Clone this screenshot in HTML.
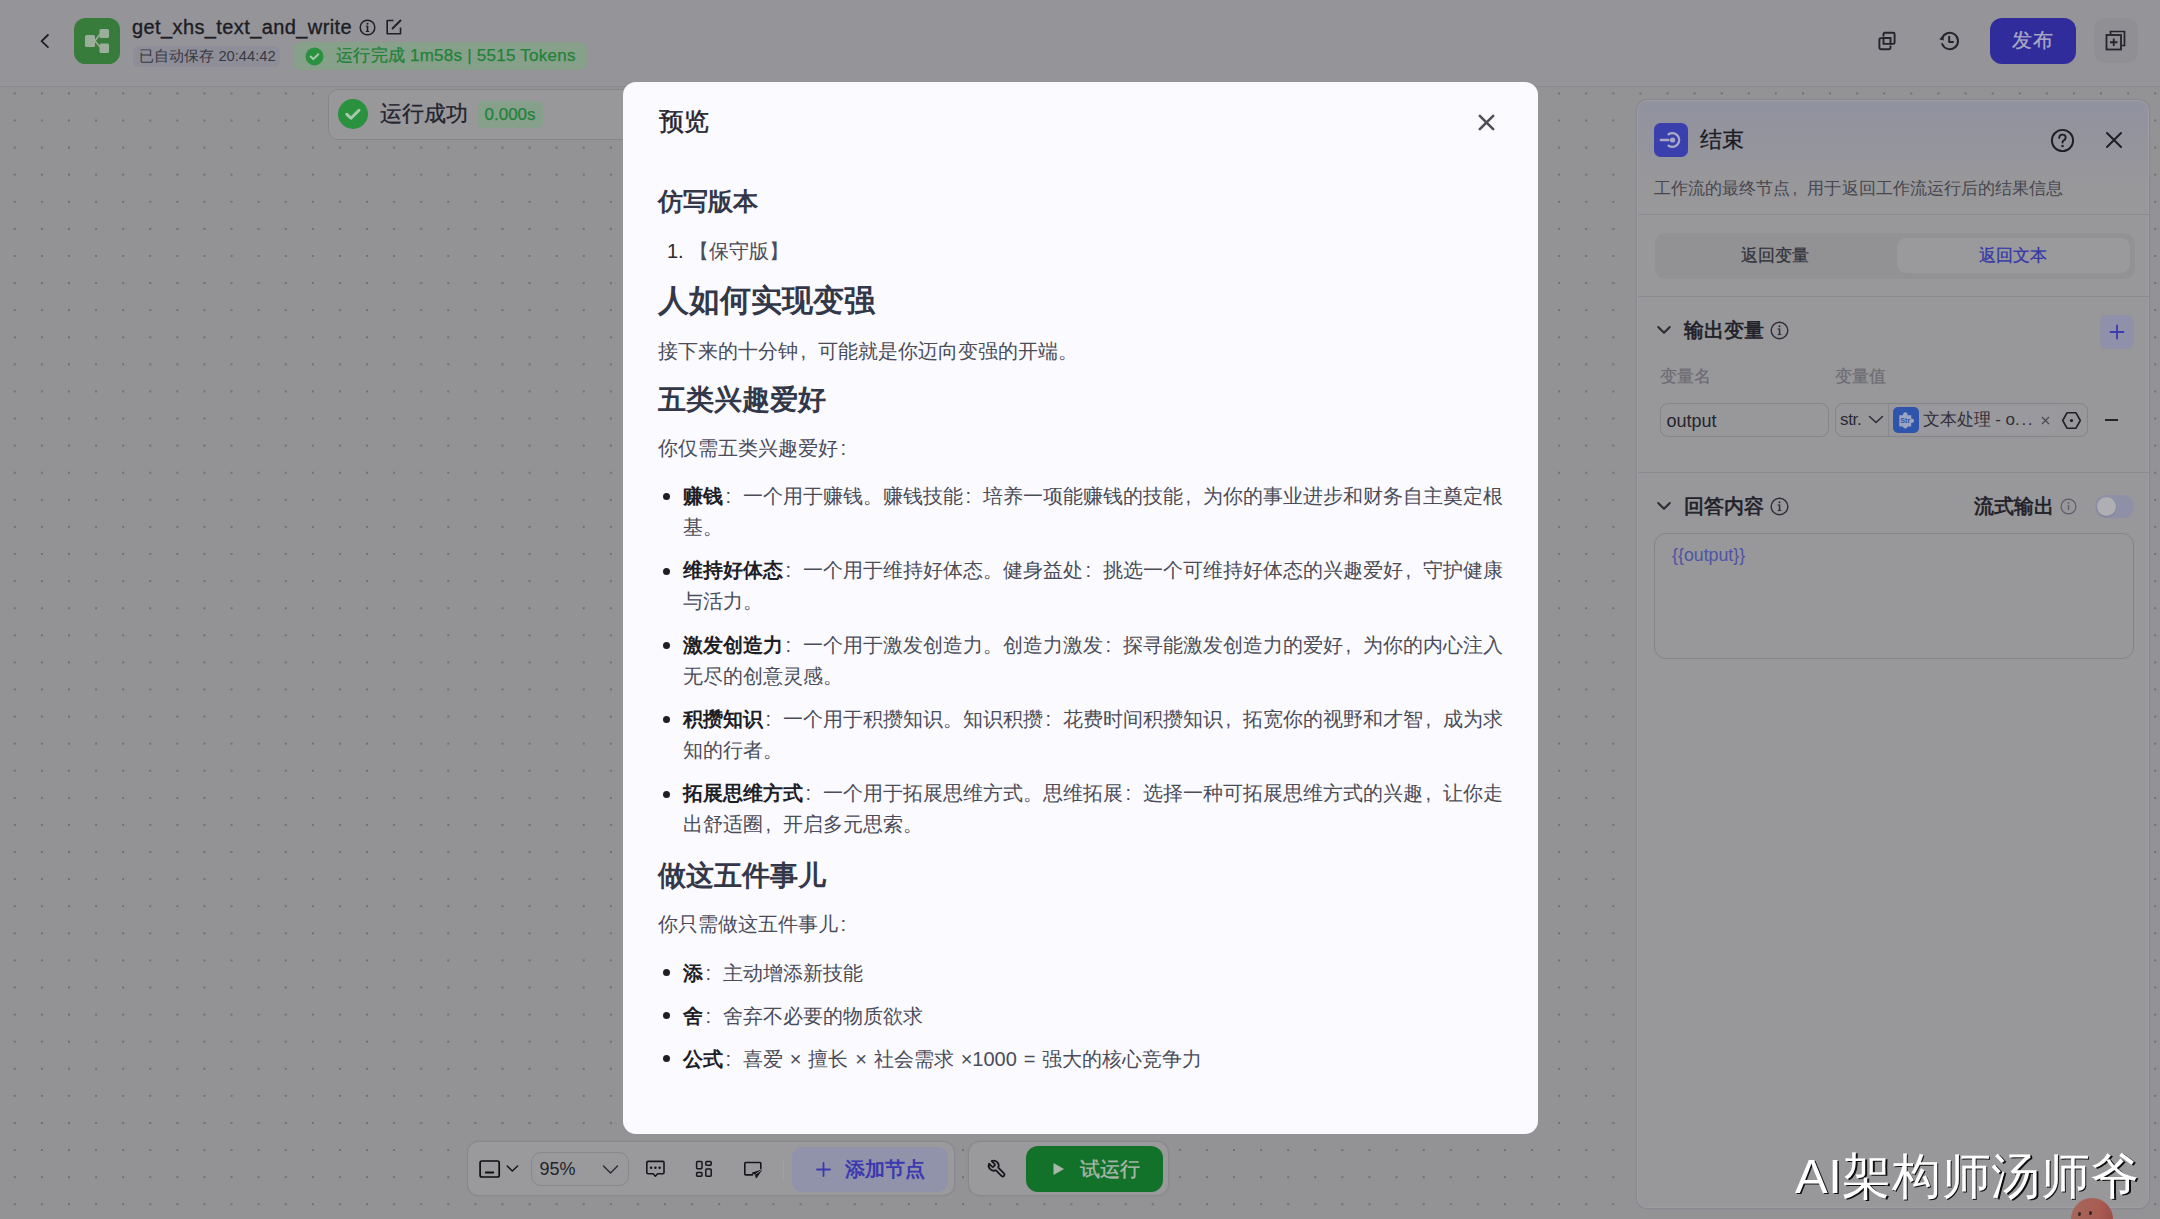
<!DOCTYPE html>
<html><head><meta charset="utf-8">
<style>
*{box-sizing:border-box;margin:0;padding:0}
html,body{width:2160px;height:1219px;overflow:hidden}
body{font-family:"Liberation Sans",sans-serif;background:#939396;position:relative;color:#1c1c24}
.a{position:absolute;white-space:nowrap}
svg.a{overflow:visible}
#canvas{position:absolute;left:0;top:87px;width:2160px;height:1132px;background-color:#939396;
background-image:radial-gradient(circle at 50% 50%,#707072 0,#707072 0.8px,rgba(112,112,114,0) 1.45px);
background-size:27.1px 27.1px;background-position:1.25px -7.15px}
#header{position:absolute;left:0;top:0;width:2160px;height:87px;background:#959499;border-bottom:1.3px solid #88888f}
#modal{position:absolute;left:623px;top:82px;width:915px;height:1052px;background:#fbfaff;border-radius:13px}
.h{color:#333849;font-weight:bold}
.b{font-size:20px;line-height:32px;color:#4a4c58}
.b b{color:#1e1e26}
.p{font-style:normal;display:inline-block;width:1em;text-indent:.12em}
.dot{position:absolute;left:663.3px;width:7px;height:7px;border-radius:50%;background:#1e1e26}
</style></head><body>
<div id="canvas"></div>
<div id="header">
  <svg class="a" style="left:38px;top:32px" width="14" height="18" viewBox="0 0 14 18"><path d="M9.9 3 L3.6 9.1 L9.9 15.1" fill="none" stroke="#1e1e26" stroke-width="1.8" stroke-linecap="round" stroke-linejoin="round"/></svg>
  <div class="a" style="left:74px;top:18px;width:46px;height:46px;border-radius:11.5px;background:#377c3b"></div>
  <svg class="a" style="left:74px;top:18px" width="46" height="46" viewBox="0 0 46 46">
    <g fill="#9aae9b"><rect x="11" y="17" width="10" height="12" rx="1.5"/><rect x="25.5" y="11" width="9.5" height="9" rx="1.5"/><rect x="25.5" y="25.5" width="9.5" height="9.5" rx="1.5"/></g>
    <path d="M21 23 L26 16 M21 23 L26 29" stroke="#9aae9b" stroke-width="1.5" fill="none"/>
  </svg>
  <div class="a" style="left:132px;top:14px;font-size:20px;line-height:26px;color:#1c1c24;letter-spacing:0.4px;-webkit-text-stroke:0.35px #1c1c24">get_xhs_text_and_write</div>
  <svg class="a" style="left:359px;top:18.5px" width="17" height="17" viewBox="0 0 17 17"><circle cx="8.5" cy="8.5" r="7.3" fill="none" stroke="#1e1e26" stroke-width="1.5"/><rect x="7.7" y="7" width="1.6" height="5.5" fill="#1e1e26"/><circle cx="8.5" cy="4.8" r="1" fill="#1e1e26"/><path d="M6.8 7.2h2.4M6.8 12.5h3.4" stroke="#1e1e26" stroke-width="1"/></svg>
  <svg class="a" style="left:386px;top:19px" width="16" height="16" viewBox="0 0 16 16"><path d="M7.5 1.5 H1.2 V14.8 H14.5 V8.5" fill="none" stroke="#1e1e26" stroke-width="1.6" stroke-linejoin="round"/><path d="M6.5 9.5 L14.5 1.5" stroke="#1e1e26" stroke-width="1.8" stroke-linecap="round"/></svg>
  <div class="a" style="left:132.5px;top:45.5px;width:147.5px;height:21.5px;border-radius:6px;background:#8e8e99"></div>
  <div class="a" style="left:139.3px;top:45.5px;font-size:14.7px;line-height:21.5px;color:#383842">已自动保存 20:44:42</div>
  <div class="a" style="left:292.5px;top:42.3px;width:294px;height:28px;border-radius:8px;background:#86a089"></div>
  <svg class="a" style="left:304.5px;top:47.3px" width="19" height="19" viewBox="0 0 19 19"><circle cx="9.5" cy="9.5" r="9" fill="#2a913f"/><path d="M5.6 9.6 L8.3 12.1 L13.3 7.2" fill="none" stroke="#a8c8ac" stroke-width="2" stroke-linecap="round" stroke-linejoin="round"/></svg>
  <div class="a" style="left:336px;top:42.3px;font-size:17px;line-height:28px;color:#22823a;letter-spacing:0.25px;-webkit-text-stroke:0.25px #22823a">运行完成 1m58s | 5515 Tokens</div>

  <svg class="a" style="left:1877px;top:31px" width="20" height="20" viewBox="0 0 20 20"><path d="M6.5 5.5 V3.2 Q6.5 1.8 7.9 1.8 H16.2 Q17.6 1.8 17.6 3.2 V11.5 Q17.6 12.9 16.2 12.9 H13.6" fill="none" stroke="#24242c" stroke-width="1.9"/><path d="M13.5 14.5 V16.8 Q13.5 18.2 12.1 18.2 H3.8 Q2.4 18.2 2.4 16.8 V8.5 Q2.4 7.1 3.8 7.1 H6.4" fill="none" stroke="#24242c" stroke-width="1.9"/><path d="M6.5 7 V12.9 H13.5 V7 Z" fill="none" stroke="#24242c" stroke-width="1.9"/></svg>
  <svg class="a" style="left:1938px;top:30.5px" width="22" height="20" viewBox="0 0 22 20"><path d="M4 7.5 A 8.2 8.2 0 1 1 4.2 13" fill="none" stroke="#24242c" stroke-width="2" stroke-linecap="round"/><path d="M1.2 8.2 L5.2 4.6 L5.8 9.4 Z" fill="#24242c"/><path d="M11.2 5.8 V11 H15" fill="none" stroke="#24242c" stroke-width="2" stroke-linecap="round" stroke-linejoin="round"/></svg>
  <div class="a" style="left:1990px;top:18px;width:85.5px;height:45.5px;border-radius:12px;background:#302c9b;color:#a9a8c4;-webkit-text-stroke:0.3px #a9a8c4;font-size:20px;line-height:45.5px;text-align:center;letter-spacing:0.5px">发布</div>
  <div class="a" style="left:2093.5px;top:17.5px;width:44.5px;height:45px;border-radius:12px;background:#908f94"></div>
  <svg class="a" style="left:2105px;top:30px" width="21" height="21" viewBox="0 0 21 21"><path d="M5.5 4.5 V1.5 H19.5 V15.5 H16.5" fill="none" stroke="#24242c" stroke-width="1.7"/><rect x="1.5" y="5" width="14.5" height="14.5" fill="none" stroke="#24242c" stroke-width="1.8"/><path d="M8.75 8.5 V16 M5 12.25 H12.5" stroke="#24242c" stroke-width="1.8"/></svg>
</div>

<!-- node card -->
<div class="a" style="left:327.5px;top:89.3px;width:420px;height:50.5px;border-radius:10px;background:#98989b;border:1.3px solid #85858c"></div>
<svg class="a" style="left:338px;top:99.4px" width="30" height="30" viewBox="0 0 30 30"><circle cx="15" cy="15" r="15" fill="#2a913f"/><path d="M8.8 15.3 L13 19.2 L21 11.3" fill="none" stroke="#a8c8ac" stroke-width="3" stroke-linecap="round" stroke-linejoin="round"/></svg>
<div class="a" style="left:380px;top:99.4px;font-size:22px;line-height:30px;color:#24242e;-webkit-text-stroke:0.3px #24242e">运行成功</div>
<div class="a" style="left:477px;top:100.8px;width:66px;height:27px;border-radius:5px;background:#87a08c;color:#22823a;font-size:17px;line-height:27px;padding-left:7.5px;-webkit-text-stroke:0.25px #22823a">0.000s</div>

<!-- PANEL -->
<div class="a" style="left:1636.5px;top:99.5px;width:512.5px;height:1108px;border-radius:10px;background:#98979a;border:1.8px solid #9e9da3;box-shadow:0 0 0 1.2px #8a8990;overflow:hidden">
  <div class="a" style="left:0;top:0;width:512px;height:115px;background:linear-gradient(180deg,rgba(140,142,165,.55) 0%,rgba(140,142,165,.25) 45%,rgba(140,142,165,0) 70%)"></div>
</div>
<div class="a" style="left:1654px;top:123px;width:34px;height:34px;border-radius:6.5px;background:#3b3fae"></div>
<svg class="a" style="left:1654px;top:123px" width="34" height="34" viewBox="0 0 34 34"><path d="M6.8 17 H14.5" stroke="#a7a8c6" stroke-width="2.4" stroke-linecap="round"/><path d="M14.6 11.3 A 6.8 6.8 0 1 1 14.6 22.7" fill="none" stroke="#a7a8c6" stroke-width="2.4" stroke-linecap="round"/><circle cx="18.6" cy="17" r="2.6" fill="#a7a8c6"/></svg>
<div class="a" style="left:1700px;top:125px;font-size:22px;line-height:30px;color:#1c1c24;-webkit-text-stroke:0.3px #1c1c24">结束</div>
<svg class="a" style="left:2050px;top:127.5px" width="25" height="25" viewBox="0 0 25 25"><circle cx="12.5" cy="12.5" r="10.6" fill="none" stroke="#1e1e26" stroke-width="1.9"/><path d="M9.2 9.9 Q9.2 6.6 12.5 6.6 Q15.7 6.6 15.7 9.6 Q15.7 11.4 13.8 12.3 Q12.5 13 12.5 14.6" fill="none" stroke="#1e1e26" stroke-width="1.9" stroke-linecap="round"/><circle cx="12.5" cy="17.9" r="1.25" fill="#1e1e26"/></svg>
<svg class="a" style="left:2106px;top:132px" width="16" height="16" viewBox="0 0 16 16"><path d="M1 1 L15 15 M15 1 L1 15" stroke="#1e1e26" stroke-width="2" stroke-linecap="round"/></svg>
<div class="a" style="left:1654px;top:177px;font-size:17px;line-height:24px;color:#46464f;letter-spacing:0.05px">工作流的最终节点<i class="p">,</i>用于返回工作流运行后的结果信息</div>
<div class="a" style="left:1637.5px;top:213.7px;width:511px;height:1.5px;background:#8a8a90"></div>
<!-- segmented -->
<div class="a" style="left:1654.5px;top:233px;width:480px;height:45.5px;border-radius:11px;background:#929295"></div>
<div class="a" style="left:1897px;top:238px;width:232.5px;height:35px;border-radius:9px;background:#9a9a9d"></div>
<div class="a" style="left:1741px;top:242px;font-size:17px;line-height:27px;color:#34343c;-webkit-text-stroke:0.3px #34343c">返回变量</div>
<div class="a" style="left:1978.5px;top:242px;font-size:17px;line-height:27px;color:#3538a6;-webkit-text-stroke:0.3px #3538a6">返回文本</div>
<div class="a" style="left:1637.5px;top:295.7px;width:511px;height:1.5px;background:#8a8a90"></div>
<!-- output vars -->
<svg class="a" style="left:1656px;top:324px" width="16" height="12" viewBox="0 0 16 12"><path d="M2.2 3 L8 8.8 L13.8 3" fill="none" stroke="#2a2a32" stroke-width="2" stroke-linecap="round" stroke-linejoin="round"/></svg>
<div class="a" style="left:1684px;top:316px;font-size:20px;line-height:28px;color:#202028;-webkit-text-stroke:0.65px #202028">输出变量</div>
<svg class="a" style="left:1770px;top:321px" width="19" height="19" viewBox="0 0 19 19"><circle cx="9.5" cy="9.5" r="8.3" fill="none" stroke="#2e2e36" stroke-width="1.4"/><rect x="8.8" y="7.8" width="1.5" height="5.8" fill="#2e2e36"/><circle cx="9.5" cy="5.3" r="1" fill="#2e2e36"/><path d="M7.6 8h2.6M7.6 13.6h3.8" stroke="#2e2e36" stroke-width="1"/></svg>
<div class="a" style="left:2100px;top:314.5px;width:34px;height:34px;border-radius:7px;background:#8f91aa"></div>
<svg class="a" style="left:2100px;top:314.5px" width="34" height="34" viewBox="0 0 34 34"><path d="M17 10.5 V23.5 M10.5 17 H23.5" stroke="#3c3ab0" stroke-width="1.8" stroke-linecap="round"/></svg>
<div class="a" style="left:1659.5px;top:365px;font-size:17px;line-height:24px;color:#6c6c72;-webkit-text-stroke:0.2px #6c6c72">变量名</div>
<div class="a" style="left:1834.5px;top:365px;font-size:17px;line-height:24px;color:#6c6c72;-webkit-text-stroke:0.2px #6c6c72">变量值</div>
<div class="a" style="left:1660px;top:403px;width:169px;height:34px;border-radius:8px;border:1.3px solid #84848b;background:#98989b"></div>
<div class="a" style="left:1666.5px;top:407px;font-size:18px;line-height:28px;color:#24242c">output</div>
<div class="a" style="left:1835px;top:403px;width:253px;height:34px;border-radius:8px;border:1.3px solid #84848b;background:#98989b"></div>
<div class="a" style="left:1888px;top:404px;width:1.2px;height:32px;background:#88888f"></div>
<div class="a" style="left:1840px;top:406px;font-size:17px;line-height:28px;color:#2a2a32;letter-spacing:-0.3px">str.</div>
<svg class="a" style="left:1868px;top:414px" width="16" height="11" viewBox="0 0 16 11"><path d="M1.5 2.5 L8 8.5 L14.5 2.5" fill="none" stroke="#2a2a32" stroke-width="1.5" stroke-linecap="round" stroke-linejoin="round"/></svg>
<div class="a" style="left:1891.5px;top:406.3px;width:165.5px;height:27px;border-radius:6px;background:#9a999d"></div>
<div class="a" style="left:1893.3px;top:407px;width:25.8px;height:25.7px;border-radius:5px;background:#2e55ab"></div>
<svg class="a" style="left:1893.3px;top:407px" width="26" height="26" viewBox="0 0 26 26"><path d="M6.3 8.2 H10 Q10 5.2 12.3 5.2 Q14.6 5.2 14.6 8.2 H18.2 V11.6 Q21 11.6 21 13.8 Q21 16 18.2 16 V19.5 H14.5 Q14.5 21.6 12.3 21.6 Q10.1 21.6 10.1 19.5 H6.3 Z" fill="#9ea5bf"/><text x="12.2" y="16" font-size="7.2" font-weight="bold" fill="#2e55ab" text-anchor="middle" font-family="Liberation Sans">Str</text></svg>
<div class="a" style="left:1922.5px;top:405.5px;font-size:17px;line-height:28px;color:#2f2f38">文本处理 - o<span style="letter-spacing:1.6px">...</span></div>
<svg class="a" style="left:2041px;top:416px" width="9" height="9" viewBox="0 0 9 9"><path d="M1 1 L8 8 M8 1 L1 8" stroke="#4a4a52" stroke-width="1.2"/></svg>
<svg class="a" style="left:2061px;top:410.5px" width="21" height="19" viewBox="0 0 21 19"><path d="M6 1.8 H15 L19.3 9.5 L15 17.2 H6 L1.7 9.5 Z" fill="none" stroke="#1e1e26" stroke-width="1.6" stroke-linejoin="round"/><circle cx="10.5" cy="9.5" r="1.6" fill="#1e1e26"/></svg>
<div class="a" style="left:2104.5px;top:419px;width:13.5px;height:2px;background:#24242c"></div>
<div class="a" style="left:1637.5px;top:471.7px;width:511px;height:1.5px;background:#8a8a90"></div>
<!-- answer -->
<svg class="a" style="left:1656px;top:500px" width="16" height="12" viewBox="0 0 16 12"><path d="M2.2 3 L8 8.8 L13.8 3" fill="none" stroke="#2a2a32" stroke-width="2" stroke-linecap="round" stroke-linejoin="round"/></svg>
<div class="a" style="left:1684px;top:492px;font-size:20px;line-height:28px;color:#202028;-webkit-text-stroke:0.65px #202028">回答内容</div>
<svg class="a" style="left:1770px;top:497px" width="19" height="19" viewBox="0 0 19 19"><circle cx="9.5" cy="9.5" r="8.3" fill="none" stroke="#2e2e36" stroke-width="1.4"/><rect x="8.8" y="7.8" width="1.5" height="5.8" fill="#2e2e36"/><circle cx="9.5" cy="5.3" r="1" fill="#2e2e36"/><path d="M7.6 8h2.6M7.6 13.6h3.8" stroke="#2e2e36" stroke-width="1"/></svg>
<div class="a" style="left:1974px;top:492px;font-size:20px;line-height:28px;color:#202028;-webkit-text-stroke:0.65px #202028">流式输出</div>
<svg class="a" style="left:2060px;top:497.5px" width="17" height="17" viewBox="0 0 17 17"><circle cx="8.5" cy="8.5" r="7.4" fill="none" stroke="#5e5e68" stroke-width="1.2"/><rect x="7.9" y="7" width="1.3" height="5" fill="#5e5e68"/><circle cx="8.5" cy="4.8" r=".9" fill="#5e5e68"/></svg>
<div class="a" style="left:2094.5px;top:494.5px;width:39px;height:23px;border-radius:12px;background:#8e90a8"></div>
<div class="a" style="left:2097px;top:496.5px;width:19px;height:19px;border-radius:50%;background:#aeaeb3;box-shadow:0 1px 2px rgba(0,0,0,.15)"></div>
<div class="a" style="left:1654px;top:533px;width:480px;height:125.5px;border-radius:12px;border:1.3px solid #84848b;background:#98989b"></div>
<div class="a" style="left:1672px;top:541.5px;font-size:17.8px;line-height:26px;color:#4e53a4">{{output}}</div>

<!-- TOOLBAR -->
<div class="a" style="left:466.5px;top:1141.3px;width:488px;height:54.8px;border-radius:12px;background:#9a9a9c;border:1.3px solid #88888e;box-shadow:0 0 2px rgba(0,0,0,.08)"></div>
<svg class="a" style="left:478px;top:1159px" width="23" height="19" viewBox="0 0 23 19"><rect x="2.1" y="2" width="19.1" height="16" rx="1.8" fill="none" stroke="#0e0e12" stroke-width="1.7"/><path d="M7.8 13.5 H15.3" stroke="#0e0e12" stroke-width="1.8" stroke-linecap="round"/></svg>
<svg class="a" style="left:505px;top:1163px" width="14" height="10" viewBox="0 0 14 10"><path d="M2.2 3 L7.3 8 L12.6 3" fill="none" stroke="#0e0e12" stroke-width="1.3" stroke-linecap="round" stroke-linejoin="round"/></svg>
<div class="a" style="left:530.5px;top:1152.3px;width:98px;height:33.5px;border-radius:10px;border:1.3px solid #88888f"></div>
<div class="a" style="left:539.5px;top:1155px;font-size:18px;line-height:28px;color:#24242c">95%</div>
<svg class="a" style="left:602px;top:1164px" width="17" height="11" viewBox="0 0 17 11"><path d="M1.5 2 L8.5 9 L15.5 2" fill="none" stroke="#2e2e36" stroke-width="1.5" stroke-linecap="round" stroke-linejoin="round"/></svg>
<svg class="a" style="left:645px;top:1160px" width="21" height="19" viewBox="0 0 21 19"><path d="M3.2 1.4 H17.8 Q19 1.4 19 2.6 V12.6 Q19 13.8 17.8 13.8 H12.6 L10.4 16.2 L8.2 13.8 H3 Q1.8 13.8 1.8 12.6 V2.6 Q1.8 1.4 3.2 1.4 Z" fill="none" stroke="#16161c" stroke-width="1.6" stroke-linejoin="round"/><circle cx="6.1" cy="7.8" r="1.25" fill="#16161c"/><circle cx="10.4" cy="7.8" r="1.25" fill="#16161c"/><circle cx="14.6" cy="7.8" r="1.25" fill="#16161c"/></svg>
<svg class="a" style="left:695px;top:1160px" width="18" height="18" viewBox="0 0 18 18"><g fill="none" stroke="#16161c" stroke-width="1.5"><rect x="1.6" y="1.6" width="5.4" height="7.1" rx=".9"/><rect x="1.6" y="12.6" width="5.4" height="3.6" rx=".9"/><rect x="10.8" y="1.6" width="5.4" height="3.6" rx=".9"/><rect x="10.8" y="9.1" width="5.4" height="7.1" rx=".9"/></g></svg>
<svg class="a" style="left:743px;top:1160px" width="20" height="19" viewBox="0 0 20 19"><path d="M9.5 14.9 H2.6 Q1.8 14.9 1.8 14.1 V3.3 Q1.8 2.5 2.6 2.5 H17 Q17.8 2.5 17.8 3.3 V8.6" fill="none" stroke="#16161c" stroke-width="1.6" stroke-linecap="round"/><path d="M18.1 10.3 L9.6 13.1 L12.6 14.2 L13.3 17.5 Z" fill="#16161c" stroke="#16161c" stroke-width="1.3" stroke-linejoin="round"/><path d="M18.1 10.3 L12.6 14.2" stroke="#9a9a9c" stroke-width=".9"/></svg>
<div class="a" style="left:783px;top:1158.5px;width:1.2px;height:21.5px;background:#a0a0a6"></div>
<div class="a" style="left:792px;top:1146.5px;width:155.5px;height:45px;border-radius:10px;background:#9193aa"></div>
<svg class="a" style="left:816px;top:1162px" width="15" height="15" viewBox="0 0 15 15"><path d="M7.5 1 V14 M1 7.5 H14" stroke="#3c39b0" stroke-width="1.8" stroke-linecap="round"/></svg>
<div class="a" style="left:845px;top:1155px;font-size:20px;line-height:28px;color:#3c39b0;font-weight:bold">添加节点</div>
<div class="a" style="left:968px;top:1141.3px;width:201px;height:54.8px;border-radius:12px;background:#9a9a9c;border:1.3px solid #88888e;box-shadow:0 0 2px rgba(0,0,0,.08)"></div>
<svg class="a" style="left:986.5px;top:1159.3px" width="20" height="20" viewBox="0 0 24 24"><g transform="translate(24,0) scale(-1,1)"><path d="M14.7 6.3a1 1 0 0 0 0 1.4l1.6 1.6a1 1 0 0 0 1.4 0l3.77-3.77a6 6 0 0 1-7.94 7.94l-6.91 6.91a2.12 2.12 0 0 1-3-3l6.91-6.91a6 6 0 0 1 7.94-7.94l-3.76 3.76z" fill="none" stroke="#16161c" stroke-width="2.1" stroke-linejoin="round"/></g></svg>
<div class="a" style="left:1025.5px;top:1146px;width:137.5px;height:45.5px;border-radius:12px;background:#137229"></div>
<svg class="a" style="left:1052px;top:1162px" width="13" height="14" viewBox="0 0 13 14"><path d="M1.5 1 L12 7 L1.5 13 Z" fill="#a9b6ab"/></svg>
<div class="a" style="left:1080px;top:1155px;font-size:20px;line-height:28px;color:#a9b6ab;-webkit-text-stroke:0.4px #a9b6ab">试运行</div>

<!-- MODAL -->
<div id="modal"></div>
<svg class="a" style="left:1478px;top:113.5px" width="17" height="17" viewBox="0 0 17 17"><path d="M1.8 1.8 L15.2 15.2 M15.2 1.8 L1.8 15.2" stroke="#4e4d5a" stroke-width="2.6" stroke-linecap="round"/></svg>
<div class="a t" style="left:658.5px;top:104.5px;font-size:25px;line-height:32px;color:#25252f;-webkit-text-stroke:0.45px #25252f">预览</div>
<div class="a h" style="left:658px;top:185px;font-size:25px;line-height:32px">仿写版本</div>
<div class="a b" style="left:667px;top:235px;color:#2a2a33">1.</div>
<div class="a b" style="left:688.5px;top:235px">【保守版】</div>
<div class="a h" style="left:658px;top:285px;font-size:31px;line-height:32px">人如何实现变强</div>
<div class="a b" style="left:658px;top:334.5px">接下来的十分钟<i class="p">,</i>可能就是你迈向变强的开端。</div>
<div class="a h" style="left:658px;top:383.5px;font-size:28px;line-height:32px">五类兴趣爱好</div>
<div class="a b" style="left:658px;top:432px">你仅需五类兴趣爱好<i class="p">:</i></div>
<div class="dot" style="top:493.3px"></div>
<div class="a b" style="left:683px;top:481px;line-height:31.3px"><b>赚钱</b><i class="p">:</i>一个用于赚钱。赚钱技能<i class="p">:</i>培养一项能赚钱的技能<i class="p">,</i>为你的事业进步和财务自主奠定根<br>基。</div>
<div class="dot" style="top:567.5px"></div>
<div class="a b" style="left:683px;top:555.2px;line-height:31.3px"><b>维持好体态</b><i class="p">:</i>一个用于维持好体态。健身益处<i class="p">:</i>挑选一个可维持好体态的兴趣爱好<i class="p">,</i>守护健康<br>与活力。</div>
<div class="dot" style="top:641.8px"></div>
<div class="a b" style="left:683px;top:629.5px;line-height:31.3px"><b>激发创造力</b><i class="p">:</i>一个用于激发创造力。创造力激发<i class="p">:</i>探寻能激发创造力的爱好<i class="p">,</i>为你的内心注入<br>无尽的创意灵感。</div>
<div class="dot" style="top:716px"></div>
<div class="a b" style="left:683px;top:703.7px;line-height:31.3px"><b>积攒知识</b><i class="p">:</i>一个用于积攒知识。知识积攒<i class="p">:</i>花费时间积攒知识<i class="p">,</i>拓宽你的视野和才智<i class="p">,</i>成为求<br>知的行者。</div>
<div class="dot" style="top:790.5px"></div>
<div class="a b" style="left:683px;top:778.2px;line-height:31.3px"><b>拓展思维方式</b><i class="p">:</i>一个用于拓展思维方式。思维拓展<i class="p">:</i>选择一种可拓展思维方式的兴趣<i class="p">,</i>让你走<br>出舒适圈<i class="p">,</i>开启多元思索。</div>
<div class="a h" style="left:658px;top:860px;font-size:28px;line-height:32px">做这五件事儿</div>
<div class="a b" style="left:658px;top:908px">你只需做这五件事儿<i class="p">:</i></div>
<div class="dot" style="top:969.3px"></div>
<div class="a b" style="left:683px;top:957px"><b>添</b><i class="p">:</i>主动增添新技能</div>
<div class="dot" style="top:1012px"></div>
<div class="a b" style="left:683px;top:999.6px"><b>舍</b><i class="p">:</i>舍弃不必要的物质欲求</div>
<div class="dot" style="top:1055px"></div>
<div class="a b" style="left:683px;top:1042.5px;word-spacing:1.3px"><b>公式</b><i class="p">:</i>喜爱 × 擅长 × 社会需求 ×1000 = 强大的核心竞争力</div>

<!-- watermark -->
<div class="a" style="left:1795px;top:1144px;font-size:49px;line-height:64px;color:#fff;letter-spacing:0.6px;text-shadow:1.4px 1.4px 0.4px rgba(0,0,0,.9)">AI架构师汤师爷</div>
<div class="a" style="left:2071.4px;top:1198.3px;width:42px;height:42px;border-radius:50%;background:linear-gradient(100deg,#a4685c 0%,#a85c52 60%,#9a4a44 100%)"></div><div class="a" style="left:2077.6px;top:1211.5px;width:2.6px;height:4.4px;border-radius:50%;background:#3a2622;transform:rotate(12deg)"></div><div class="a" style="left:2088.7px;top:1211px;width:2.6px;height:4.4px;border-radius:50%;background:#3a2622;transform:rotate(12deg)"></div>
</body></html>
